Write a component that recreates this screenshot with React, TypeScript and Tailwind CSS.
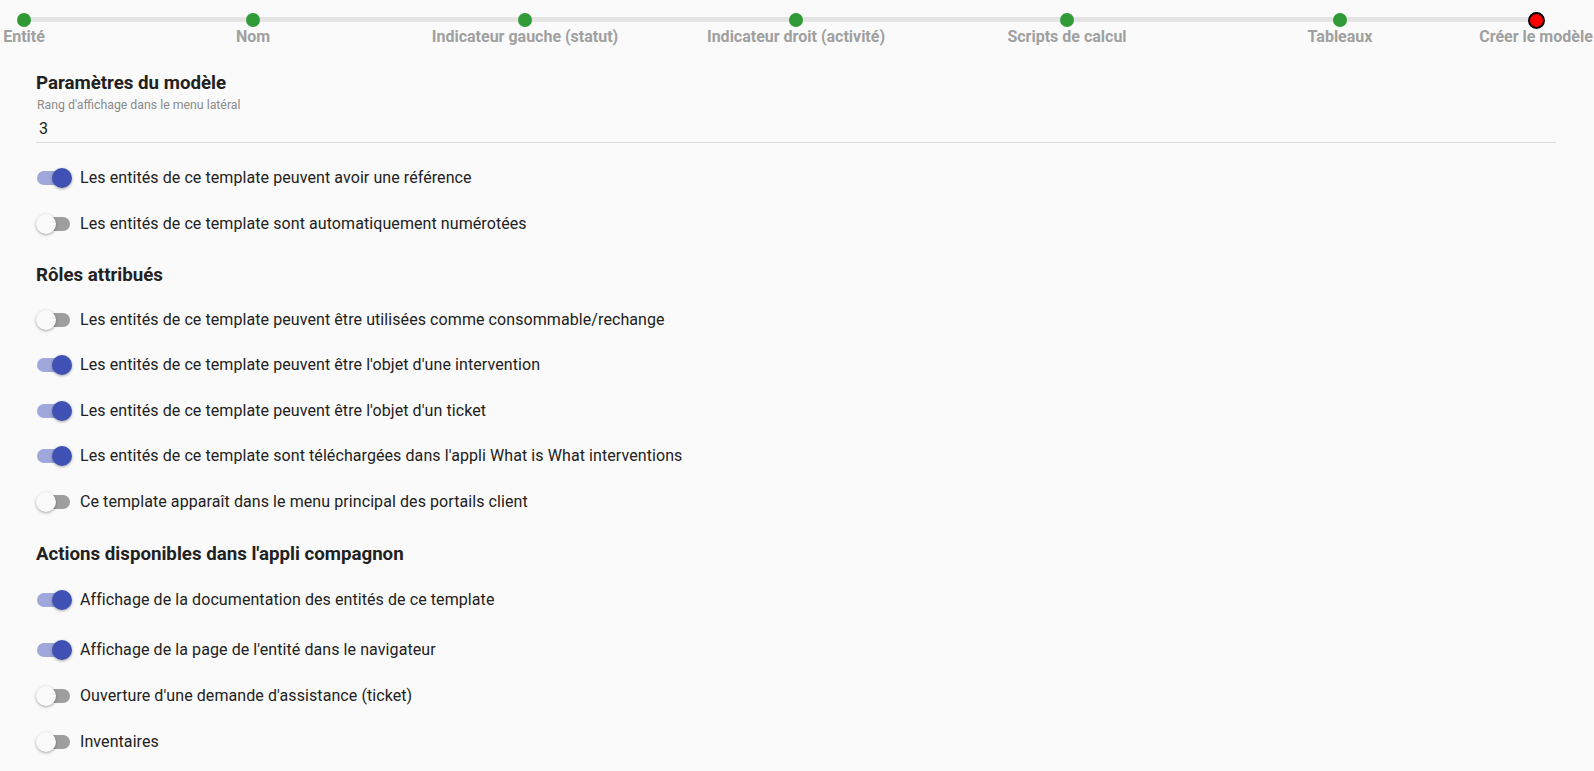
import React from "react";

type Step = { label: string; gap: string; current?: boolean };

const steps: Step[] = [
  { label: "Entité", gap: "ml-0" },
  { label: "Nom", gap: "ml-[229px]" },
  { label: "Indicateur gauche (statut)", gap: "ml-[272px]" },
  { label: "Indicateur droit (activité)", gap: "ml-[271px]" },
  { label: "Scripts de calcul", gap: "ml-[271px]" },
  { label: "Tableaux", gap: "ml-[273px]" },
  { label: "Créer le modèle", gap: "ml-[196px]", current: true },
];

function Stepper() {
  return (
    <div className="relative h-[48px] pt-[13px]">
      {/* rail */}
      <div className="absolute left-[24px] top-[17px] h-[5px] w-[1512px] bg-[#e4e4e4]" />
      <div className="relative flex pl-[24px]">
        {steps.map((s) => (
          <div key={s.label} className={`flex w-0 flex-col items-center ${s.gap}`}>
            <div className="flex h-3.5 items-center justify-center">
              {s.current ? (
                <span className="block h-[17px] w-[17px] shrink-0 rounded-full border-2 border-black bg-[#ff0000]" />
              ) : (
                <span className="block h-3.5 w-3.5 shrink-0 rounded-full bg-[#2f9a36]" />
              )}
            </div>
            <span className="whitespace-nowrap text-[16px] font-bold leading-5 text-[#a0a0a0]">
              {s.label}
            </span>
          </div>
        ))}
      </div>
    </div>
  );
}

function Switch({ on }: { on: boolean }) {
  return (
    <span className="relative mr-[10px] ml-px inline-block h-[14px] w-[33px] shrink-0">
      <span
        className={
          on
            ? "absolute inset-0 rounded-full bg-[#9fa8da]"
            : "absolute inset-0 rounded-full bg-[#9e9e9e]"
        }
      />
      <span
        className={
          on
            ? "absolute top-[-3px] left-[15px] h-5 w-5 rounded-full bg-[#3f51b5] shadow-[0_1px_3px_rgba(0,0,0,0.35)]"
            : "absolute top-[-3px] left-[-1px] h-5 w-5 rounded-full bg-[#fafafa] shadow-[0_1px_3px_rgba(0,0,0,0.35)]"
        }
      />
    </span>
  );
}

function Row({ on, label, tall = false }: { on: boolean; label: string; tall?: boolean }) {
  return (
    <div className={`flex items-center ${tall ? "h-[46px]" : "h-[45.5px]"}`}>
      <Switch on={on} />
      <span className="text-[16px] leading-5 tracking-[0.005em] text-[#212121]">{label}</span>
    </div>
  );
}

function Heading({ children, extra = "" }: { children: React.ReactNode; extra?: string }) {
  return <h2 className={`text-[18.7px] font-bold leading-6 text-[#212121] ${extra}`}>{children}</h2>;
}

export default function App() {
  return (
    <div
      className="min-h-screen bg-[#fafafa] text-[#212121]"
      style={{ fontFamily: "Roboto, 'Liberation Sans', sans-serif" }}
    >
      <Stepper />

      <main className="pr-[38px] pl-[36px]">
        <Heading extra="mt-[23px]">Paramètres du modèle</Heading>
        <div className="border-b border-[#dcdcdc] pb-[3px]">
          <p className="mt-[2px] pl-px text-[12.3px] leading-4 text-[#8a8a8a]">
            Rang d'affichage dans le menu latéral
          </p>
          <p className="mt-[6px] pl-[3px] text-[16px] leading-5 text-[#212121]">3</p>
        </div>

        <div className="mt-[12px]">
          <Row tall on label="Les entités de ce template peuvent avoir une référence" />
          <Row tall on={false} label="Les entités de ce template sont automatiquement numérotées" />
        </div>

        <Heading extra="mt-[16px]">Rôles attribués</Heading>
        <div className="mt-[10px]">
          <Row on={false} label="Les entités de ce template peuvent être utilisées comme consommable/rechange" />
          <Row on label="Les entités de ce template peuvent être l'objet d'une intervention" />
          <Row on label="Les entités de ce template peuvent être l'objet d'un ticket" />
          <Row on label="Les entités de ce template sont téléchargées dans l'appli What is What interventions" />
          <Row on={false} label="Ce template apparaît dans le menu principal des portails client" />
        </div>

        <Heading extra="mt-[17px]">Actions disponibles dans l'appli compagnon</Heading>
        <div className="mt-[11px]">
          <Row tall on label="Affichage de la documentation des entités de ce template" />
          <div className="mt-[4px]">
            <Row tall on label="Affichage de la page de l'entité dans le navigateur" />
          </div>
          <Row tall on={false} label="Ouverture d'une demande d'assistance (ticket)" />
          <Row tall on={false} label="Inventaires" />
        </div>
      </main>
    </div>
  );
}
